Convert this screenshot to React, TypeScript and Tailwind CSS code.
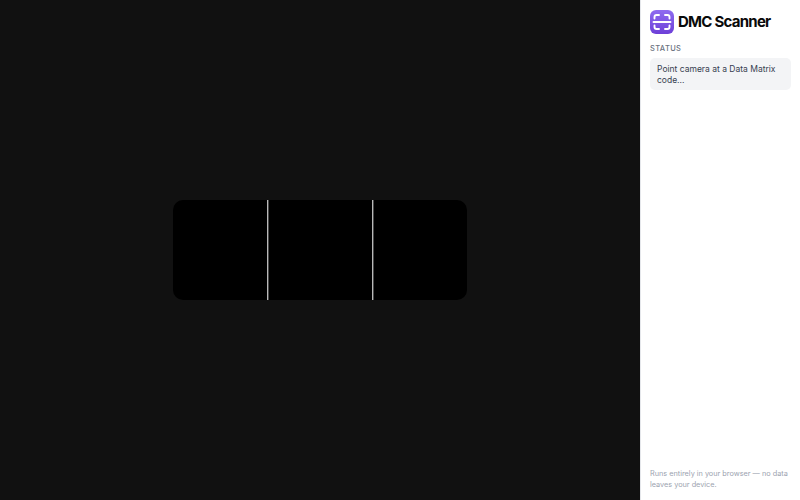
import React from 'react'

const Logo = () => (
  <svg width="24" height="24" viewBox="0 0 24 24" fill="none">
    <defs>
      <linearGradient id="logo" x1="0" y1="0" x2="0" y2="1">
        <stop offset="0" stopColor="#8f6cf0" />
        <stop offset="1" stopColor="#6d3fd8" />
      </linearGradient>
    </defs>
    <rect width="24" height="24" rx="6" fill="url(#logo)" />
    <g stroke="#fff" strokeWidth="1.9" strokeLinecap="round" strokeLinejoin="round">
      <path d="M4.500 8.500V7a2 2 0 0 1 2-2H9" />
      <path d="M15 5h2.500a2 2 0 0 1 2 2v1.500" />
      <path d="M19.500 15.500V17a2 2 0 0 1-2 2H15" />
      <path d="M9 19H6.500a2 2 0 0 1-2-2v-1.500" />
      <path d="M3.500 12h17" />
    </g>
  </svg>
)

export default function App() {
  return (
    <div className="flex h-screen w-full font-['Inter',sans-serif]">
      <main className="flex flex-1 items-center justify-center bg-[#111111]">
        <div className="flex h-[100px] w-[294px] overflow-hidden rounded-[10px] bg-black">
          <div className="w-[94px]" />
          <div className="w-[1px] bg-[#b8b8b8] shadow-[1px_0_0_#4a4a4a]" />
          <div className="w-[104px]" />
          <div className="w-[1px] bg-[#b8b8b8] shadow-[1px_0_0_#4a4a4a]" />
        </div>
      </main>
      <aside className="flex w-[160px] flex-col border-l border-[#e5e7eb] bg-white px-[9px] pt-[10px] pb-[10px]">
        <div className="flex items-center gap-[4px]">
          <Logo />
          <h1 className="text-[15px] leading-6 font-bold tracking-[-0.05em] text-[#0a0a0a]">DMC Scanner</h1>
        </div>
        <div className="mt-[9px] text-[7.5px] leading-3 font-medium tracking-[0.05em] text-[#6b7280]">STATUS</div>
        <div className="mt-[3px] rounded-[5px] bg-[#f3f4f6] px-[7px] pt-[6px] pb-[4px] text-[8.5px] leading-[11px] text-[#374151]">
          Point camera at a Data Matrix code...
        </div>
        <p className="mt-auto text-[7.3px] leading-[10.5px] text-[#9ca3af]">
          Runs entirely in your browser — no data leaves your device.
        </p>
      </aside>
    </div>
  )
}
